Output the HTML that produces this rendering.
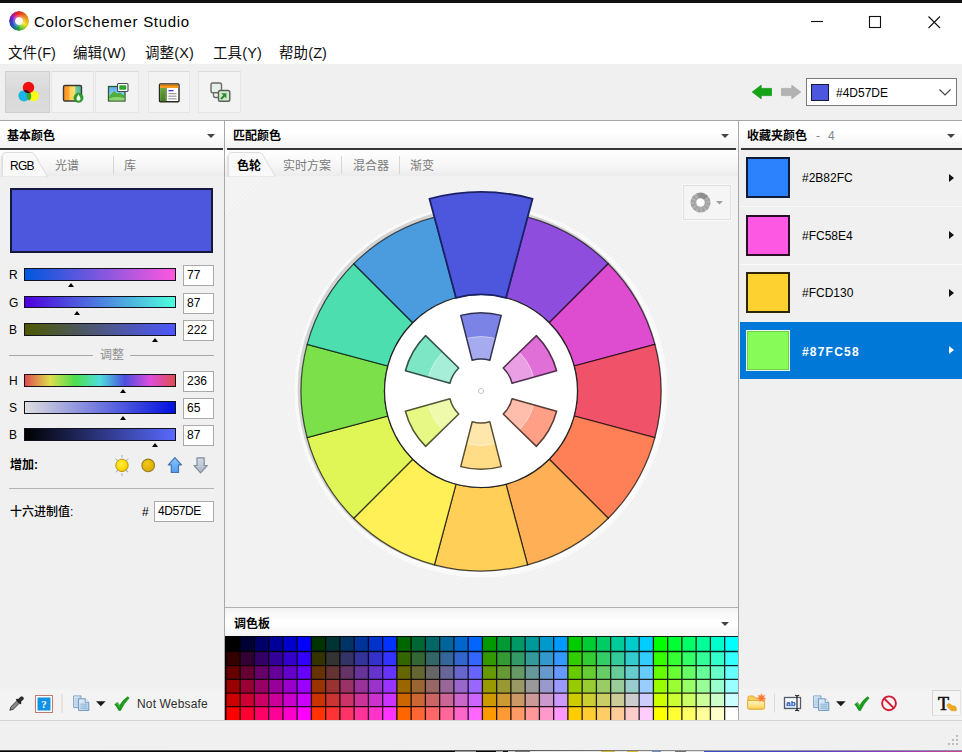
<!DOCTYPE html>
<html lang="zh-CN">
<head>
<meta charset="utf-8">
<title>ColorSchemer Studio</title>
<style>
*{box-sizing:border-box;margin:0;padding:0}
html,body{width:962px;height:752px;overflow:hidden;background:#f0f0f0}
body{position:relative;font-family:"Liberation Sans","Noto Sans CJK SC",sans-serif;font-size:12px;color:#000}
.a{position:absolute}
.t{position:absolute;white-space:nowrap;line-height:1}
.cj{font-family:"Liberation Sans","Noto Sans CJK SC",sans-serif}
#topblack{left:0;top:0;width:962px;height:2.600px;background:#101010}
#titlebar{left:0;top:3px;width:962px;height:61px;background:#fff}
.title{left:34px;top:14px;font-size:15px;letter-spacing:.7px}
.menu{top:46px;font-size:14.500px;color:#111;letter-spacing:.1px}
#toolbar{left:0;top:64px;width:962px;height:56px;background:#f0f0f0}
.tb{position:absolute;top:71px;height:42px;border:1px solid #e6e6e6;border-top-color:#dcdcdc;background:#f3f3f3}
.tb.on{background:linear-gradient(#e2e2e2,#d9d9d9 50%,#dcdcdc);border-color:#cfcfcf}
.hline{position:absolute;height:1px;background:#a5a5a5}
.vline{position:absolute;width:1px;background:#a8a8a8}
.phead{position:absolute;top:121px;height:27px;background:linear-gradient(#fdfdfd,#fff 40%,#f3f3f3)}
.pdark{position:absolute;top:148px;height:2px;background:#363636}
.ptitle{font-weight:700;font-size:12px;top:130px}
.tabrow{position:absolute;top:150px;height:26px;background:linear-gradient(#fff,#f6f6f6 60%,#ececec)}
.tab{top:160px;font-size:12px;color:#7a7a7a}
.tabsep{position:absolute;top:156px;width:1px;height:18px;background:#d6d6d6}
.caret{position:absolute;width:0;height:0;border-left:4px solid transparent;border-right:4px solid transparent;border-top:4px solid #444}
.slider{position:absolute;left:24px;width:152px;height:12.600px;border:1.500px solid #12121c}
.num{position:absolute;left:183px;width:31px;height:21px;border:1px solid #a9a9a9;background:#fff;font-size:12px;line-height:19px;padding-left:3px}
.lab{font-size:12px;left:9px}
.mark{position:absolute;width:0;height:0;border-left:3.5px solid transparent;border-right:3.5px solid transparent;border-bottom:4px solid #000}
.hatch{background:repeating-linear-gradient(135deg,#f0f0f0 0,#f0f0f0 1.4px,#f4f4f4 1.4px,#f4f4f4 2.83px)}
.fav{position:absolute;left:740px;width:222px}
.sw{position:absolute;left:746px;width:44px;height:41px;border:2px solid #141a2e}
.favt{left:802px;font-size:12px}
.tri{position:absolute;left:949px;width:0;height:0;border-top:4.5px solid transparent;border-bottom:4.5px solid transparent;border-left:5px solid #111}
</style>
</head>
<body>
<div class="a" id="titlebar"></div>
<div class="a" id="topblack"></div>

<!-- title icon -->
<div class="a" style="left:9.200px;top:11px;width:19.800px;height:19.800px;border-radius:50%;background:radial-gradient(circle,rgba(255,255,255,.25) 5px,rgba(255,255,255,0) 7px,rgba(0,0,0,.12) 9.900px),conic-gradient(from 0deg,#f02a1e,#f07a18 45deg,#f5b418 85deg,#f5e61e 120deg,#62c82a 165deg,#1ea03c 185deg,#1a80a0 210deg,#2a48c8 245deg,#5a28c8 285deg,#9a20c8 305deg,#e8204a 335deg,#f02a1e 360deg);-webkit-mask:radial-gradient(circle,transparent 3.400px,#000 4.400px);mask:radial-gradient(circle,transparent 3.400px,#000 4.400px)"></div>
<div class="t title">ColorSchemer Studio</div>

<!-- window controls -->
<svg class="a" style="left:800px;top:8px" width="160" height="30" viewBox="800 8 160 30" fill="none" stroke="#111" stroke-width="1.1">
<path d="M811 21.5h12"/>
<rect x="869.5" y="16.5" width="11" height="11"/>
<path d="M928.5 16.5l11.5 11.5M940 16.5l-11.5 11.5"/>
</svg>

<!-- menu -->
<div class="t menu" style="left:8px">文件(F)</div>
<div class="t menu" style="left:73px">编辑(W)</div>
<div class="t menu" style="left:145px">调整(X)</div>
<div class="t menu" style="left:213px">工具(Y)</div>
<div class="t menu" style="left:279px">帮助(Z)</div>

<!-- toolbar -->
<div class="a" id="toolbar"></div>
<div class="tb on" style="left:5px;width:45px"></div>
<div class="tb" style="left:51px;width:43px"></div>
<div class="tb" style="left:95px;width:44px"></div>
<div class="tb" style="left:148px;width:42px"></div>
<div class="tb" style="left:198px;width:43px"></div>
<svg class="a" style="left:0;top:64px" width="260" height="56" viewBox="0 64 260 56">
<defs>
<linearGradient id="g2" x1="0" x2="1" y1="0" y2="0"><stop offset="0" stop-color="#ff8f1e"/><stop offset=".3" stop-color="#ffa63a"/><stop offset=".36" stop-color="#ffd257"/><stop offset=".62" stop-color="#ffdf6b"/><stop offset=".68" stop-color="#7cc9a0"/><stop offset="1" stop-color="#3fb59a"/></linearGradient>
<linearGradient id="g3" x1="0" x2="0" y1="0" y2="1"><stop offset="0" stop-color="#5aa9f5"/><stop offset=".45" stop-color="#7cc6f0"/><stop offset="1" stop-color="#bfe6c0"/></linearGradient>
<linearGradient id="g4" x1="0" x2="0" y1="0" y2="1"><stop offset="0" stop-color="#6aa83a"/><stop offset="1" stop-color="#3f7f1c"/></linearGradient>
<filter id="bl" x="-20%" y="-20%" width="140%" height="140%"><feGaussianBlur stdDeviation=".65"/></filter>
</defs>
<!-- icon1: rgb circles -->
<g filter="url(#bl)">
<circle cx="33.600" cy="96" r="5.200" fill="#ffff00" fill-opacity=".9"/>
<circle cx="24" cy="95.800" r="5.600" fill="#1ab4e6"/>
<path d="M29 91.500a5.500 5.500 0 0 0 0 9a5.500 5.500 0 0 0 0-9z" fill="#3aa52a"/>
<circle cx="28.500" cy="87.500" r="5.700" fill="#f01010"/>
<path d="M24 91a5.600 5.600 0 0 0 5.500 2.300a5.600 5.600 0 0 1-3 -0.500z" fill="#400"/>
<path d="M23.700 90.500q2.500 3.500 6.300 2.300q-1.500-2.500-4.800-2.800z" fill="#30100a"/>
</g>
<!-- icon2 -->
<rect x="63.500" y="85.500" width="18" height="15.500" rx="1.500" fill="url(#g2)" stroke="#3a3a32" stroke-width="1.400"/>
<circle cx="78.500" cy="97.800" r="4.600" fill="#2f9e2f" stroke="#1f8a1f" stroke-width=".6"/>
<path d="M78.500 94.300q2 3 2 4.400a2 2 0 0 1-4 0q0-1.400 2-4.400z" fill="#eafbe6"/>
<!-- icon3 -->
<rect x="108.500" y="86.500" width="16.500" height="14.500" fill="url(#g3)" stroke="#2f5f2a" stroke-width="1.300"/>
<path d="M109.200 96l4.800-5 3.200 2.800 2.300-1.600 4.800 3.300v4.800h-15.100z" fill="#4fae3c"/>
<path d="M109.200 98.500q7-2.500 15.100-.5v2.300h-15.100z" fill="#8fd46e"/>
<rect x="117.500" y="83.500" width="10.500" height="8" rx="1" fill="#fff" stroke="#4a4a5a" stroke-width="1.100"/>
<rect x="119.300" y="85.300" width="7" height="4.400" rx=".8" fill="#2fa52f"/>
<!-- icon4 -->
<rect x="159.500" y="84" width="19.500" height="17.800" rx="1" fill="#fff" stroke="#2a2a1e" stroke-width="1.400"/>
<rect x="160.200" y="84.700" width="18.100" height="3.300" fill="#f59a1e"/>
<rect x="160.200" y="84.700" width="18.100" height="1.200" fill="#d97a10"/>
<rect x="160.200" y="88" width="5.600" height="13.100" fill="url(#g4)"/>
<rect x="165.800" y="88" width="1" height="13.100" fill="#2a3a1a" fill-opacity=".7"/>
<rect x="168.500" y="90" width="5" height="1.300" fill="#3a3ad0"/>
<rect x="168.500" y="93" width="8" height="1.200" fill="#9a9a9a"/>
<rect x="168.500" y="95.600" width="8" height="1.200" fill="#9a9a9a"/>
<rect x="168.500" y="98.200" width="8" height="1.200" fill="#9a9a9a"/>
<!-- icon5 -->
<path d="M213.500 92.500v3q0 2 2 2h3" fill="none" stroke="#6a6a6a" stroke-width="1.300"/>
<rect x="211" y="83" width="10.500" height="9.800" rx="1.800" fill="#e9efe9" stroke="#6a6a6a" stroke-width="1.400"/>
<rect x="218.500" y="90.500" width="11.300" height="10.800" rx="1.800" fill="#d6ead2" stroke="#5a5f5a" stroke-width="1.400"/>
<path d="M221.200 93.200h5.200v5.200l-1.700-1.700-3 3-1.500-1.500 3-3z" fill="#2c8f2c"/>
</svg>


<!-- history arrows + combo -->
<svg class="a" style="left:750px;top:82px" width="54" height="20" viewBox="750 82 54 20">
<path d="M752.200 92l9-6.800v3.200h10.300v7.200h-10.300v3.200z" fill="#14a414" stroke="#0f900f" stroke-width=".7" stroke-linejoin="round"/>
<path d="M800.800 92l-9-6.800v3.200h-10.300v7.200h10.300v3.200z" fill="#b2b2b2" stroke="#a8a8a8" stroke-width=".7" stroke-linejoin="round"/>
</svg>
<div class="a" style="left:806px;top:78px;width:151px;height:28px;border:1px solid #7a7a7a;background:#fff"></div>
<div class="a" style="left:811px;top:84px;width:18px;height:17px;background:#4D57DE;border:1.3px solid #15193c"></div>
<div class="t" style="left:836px;top:87px;font-size:12px">#4D57DE</div>
<svg class="a" style="left:938px;top:88px" width="14" height="9" viewBox="0 0 14 9" fill="none" stroke="#444" stroke-width="1.2"><path d="M1.5 1.5l5.500 5.500 5.500-5.500"/></svg>

<div class="hline" style="left:0;top:120px;width:962px"></div>

<!-- panel headers -->
<div class="phead" style="left:0;width:224px"></div>
<div class="phead" style="left:225px;width:513px"></div>
<div class="phead" style="left:739px;width:223px"></div>
<div class="pdark" style="left:0;width:223px"></div>
<div class="pdark" style="left:227px;width:509px"></div>
<div class="pdark" style="left:741px;width:221px"></div>
<div class="t ptitle" style="left:7px">基本颜色</div>
<div class="t ptitle" style="left:233px">匹配颜色</div>
<div class="t ptitle" style="left:747px">收藏夹颜色 <span style="font-weight:400;color:#868686;letter-spacing:2.300px">&nbsp;- 4</span></div>
<div class="caret" style="left:207px;top:134px"></div>
<div class="caret" style="left:721px;top:134px"></div>
<div class="caret" style="left:947px;top:134px"></div>

<!-- vertical separators -->
<div class="vline" style="left:224px;top:121px;height:599px"></div>
<div class="vline" style="left:738px;top:121px;height:599px"></div>

<!-- LEFT PANEL -->
<div class="tabrow" style="left:0;width:224px"></div>
<svg class="a" style="left:0;top:150px" width="60" height="27" viewBox="0 0 60 27">
<path d="M2.500 27V5.500q0-3 3-3H31q2.500 0 4 2.500L47.500 27z" fill="#f9f9f9" stroke="#dcdcdc" stroke-width="1"/><path d="M1.500 27V6" stroke="#e4e4e4" stroke-width="1.500" fill="none"/>
</svg>
<div class="t" style="left:10px;top:159.700px;font-size:12px;letter-spacing:-.7px">RGB</div>
<div class="t tab cj" style="left:55px">光谱</div>
<div class="tabsep" style="left:113px"></div>
<div class="t tab cj" style="left:124px">库</div>

<div class="a" style="left:10px;top:188px;width:203px;height:65px;background:#4D57DE;border:2px solid #14183c"></div>

<div class="t lab" style="top:269px">R</div>
<div class="slider" style="top:268px;background:linear-gradient(90deg,#0057DE,#FF57DE)"></div>
<div class="mark" style="left:67.500px;top:283.000px"></div>
<div class="num" style="top:265px">77</div>

<div class="t lab" style="top:296.500px">G</div>
<div class="slider" style="top:295.500px;background:linear-gradient(90deg,#4D00DE,#4DFFDE)"></div>
<div class="mark" style="left:73.500px;top:310.500px"></div>
<div class="num" style="top:292.500px">87</div>

<div class="t lab" style="top:324px">B</div>
<div class="slider" style="top:323px;background:linear-gradient(90deg,#4D5700,#4D57FF)"></div>
<div class="mark" style="left:152px;top:338.000px"></div>
<div class="num" style="top:320px">222</div>

<div class="hline" style="left:9px;top:355px;width:84px;background:#a8a8a8"></div>
<div class="hline" style="left:130px;top:355px;width:84px;background:#a8a8a8"></div>
<div class="t cj" style="left:100px;top:349px;font-size:12px;color:#8e8e8e">调整</div>

<div class="t lab" style="top:375px">H</div>
<div class="slider" style="top:374px;background:linear-gradient(90deg,#DE4D4D,#DEDE4D 16.7%,#4DDE4D 33.3%,#4DDEDE 50%,#4D4DDE 66.7%,#DE4DDE 83.3%,#DE4D4D)"></div>
<div class="mark" style="left:120px;top:389.000px"></div>
<div class="num" style="top:371px">236</div>

<div class="t lab" style="top:402px">S</div>
<div class="slider" style="top:401px;background:linear-gradient(90deg,#DEDEDE,#000FDE)"></div>
<div class="mark" style="left:120px;top:416.000px"></div>
<div class="num" style="top:398px">65</div>

<div class="t lab" style="top:429px">B</div>
<div class="slider" style="top:428px;background:linear-gradient(90deg,#000,#596AFF)"></div>
<div class="mark" style="left:152px;top:443.000px"></div>
<div class="num" style="top:425px">87</div>

<div class="t cj" style="left:10px;top:459px;font-size:12px;font-weight:700">增加:</div>
<svg class="a" style="left:105px;top:452px" width="110" height="28" viewBox="105 452 110 28">
<defs>
<radialGradient id="sun" cx=".45" cy=".4" r=".6"><stop offset="0" stop-color="#fff04a"/><stop offset=".7" stop-color="#ffd800"/><stop offset="1" stop-color="#e6b800"/></radialGradient>
<radialGradient id="gold" cx=".4" cy=".35" r=".7"><stop offset="0" stop-color="#f2c81a"/><stop offset=".8" stop-color="#e0ae00"/><stop offset="1" stop-color="#c89a00"/></radialGradient>
<linearGradient id="upa" x1="0" x2="0" y1="0" y2="1"><stop offset="0" stop-color="#8cc4ff"/><stop offset="1" stop-color="#4f9df0"/></linearGradient>
<linearGradient id="dna" x1="0" x2="0" y1="0" y2="1"><stop offset="0" stop-color="#d4dce6"/><stop offset="1" stop-color="#a9b6c4"/></linearGradient>
</defs>
<g stroke="#9aa0b8" stroke-width="1.100" stroke-linecap="round" opacity=".8">
<path d="M122 455.200v2M122 473.600v2M116 459l1.300 1.400M128 459l-1.300 1.400M116.300 471.800l1.300-1.400M127.700 471.800l-1.300-1.400"/>
</g>
<circle cx="122" cy="465.400" r="6.200" fill="url(#sun)" stroke="#b89a20" stroke-width="1"/>
<circle cx="148.200" cy="465.400" r="6.300" fill="url(#gold)" stroke="#94802a" stroke-width="1.100"/>
<path d="M174.900 457.600l6.600 7.300h-3v7.600h-7.200v-7.600h-3z" fill="url(#upa)" stroke="#4474ac" stroke-width="1.200" stroke-linejoin="round"/>
<path d="M200.600 472.800l6.600-7.300h-3v-7.600h-7.200v7.600h-3z" fill="url(#dna)" stroke="#7f8c9c" stroke-width="1.200" stroke-linejoin="round"/>
</svg>

<div class="hline" style="left:9px;top:488px;width:205px;background:#b4b4b4"></div>
<div class="t cj" style="left:10px;top:506px;font-size:12px;font-weight:500">十六进制值:</div>
<div class="t" style="left:142px;top:506px;font-size:12px">#</div>
<div class="num" style="left:154px;top:501px;width:60px;letter-spacing:-.4px">4D57DE</div>

<div class="a" style="left:0;top:687px;width:224px;height:33px;background:linear-gradient(#f0f0f0,#f3f3f3 4px)"></div>
<svg class="a" style="left:0;top:688px" width="224" height="32" viewBox="0 688 224 32">
<defs>
<linearGradient id="pg" x1="0" x2="1" y1="0" y2="1"><stop offset="0" stop-color="#eaf3fb"/><stop offset="1" stop-color="#a9cbe6"/></linearGradient>
<symbol id="copyic" viewBox="0 0 17 16" width="17" height="16">
<path d="M.6.600h7.400v11.800H.6z" fill="url(#pg)" stroke="#7fa3c6" stroke-width="1"/>
<path d="M1.800 3h5M1.800 5h5M1.800 7h5M1.800 9h5" stroke="#9fbfdc" stroke-width=".7"/>
<path d="M5.600 3.600h6.600l3.600 3.600v8.200H5.600z" fill="url(#pg)" stroke="#6f97bd" stroke-width="1"/>
<path d="M12.200 3.600v3.600h3.600" fill="#f4f9fd" stroke="#6f97bd" stroke-width=".9"/>
<path d="M7.300 9h6.800M7.300 11h6.800M7.300 13h6.800" stroke="#7fa6ca" stroke-width=".8"/>
</symbol>
<symbol id="chk" viewBox="0 0 16 15" width="16" height="15">
<path d="M.8 8.200l2.600-2 2.200 3Q9 3.500 13.800.4l1.300 1.500Q10 7 6.600 14.200H4.800Q3.200 10.800.8 8.200z" fill="#1c9c1c" stroke="#128212" stroke-width=".6" stroke-linejoin="round"/>
<path d="M3.400 7.200l2.200 3.400" stroke="#5fd05f" stroke-width=".8" fill="none"/>
</symbol>
</defs>
<!-- eyedropper -->
<g transform="translate(-1.200 1.300) rotate(45 16.500 703.500)">
<rect x="14.500" y="692.500" width="4" height="6" rx="1.500" fill="#2c2c2c"/>
<rect x="13.300" y="697.700" width="6.400" height="2" rx=".6" fill="#1e1e1e"/>
<path d="M14.800 699.700h3.400v8.300l-1.700 3.200-1.700-3.200z" fill="#8a8a8a" stroke="#3a3a3a" stroke-width=".9"/>
</g>
<!-- help -->
<rect x="35.500" y="695.500" width="17" height="17" fill="#fdfdfd" stroke="#c07868" stroke-width="1"/>
<rect x="37.500" y="697.500" width="13" height="13" fill="#1292e4"/>
<text x="44" y="708.200" font-family="Liberation Serif,serif" font-weight="700" font-size="11" fill="#fff" text-anchor="middle">?</text>
<rect x="61.500" y="694" width="1" height="19" fill="#e2cfd0"/>
<use href="#copyic" x="73" y="695.200"/>
<path d="M96 701.200h9.600l-4.800 5z" fill="#1a1a1a"/>
<use href="#chk" x="114" y="696.200"/>
</svg>
<div class="t" style="left:137px;top:698px;font-size:12px;color:#2e2e2e;letter-spacing:.15px">Not Websafe</div>


<!-- MIDDLE PANEL -->
<div class="tabrow" style="left:225px;width:513px"></div>
<div class="a hatch" style="left:225px;top:176px;width:513px;height:431px"></div>
<svg class="a" style="left:226px;top:150px" width="60" height="27" viewBox="0 0 60 27">
<path d="M2.500 27V5.500q0-3 3-3H33q2.500 0 4 2.500L49.500 27z" fill="#f9f9f9" stroke="#dcdcdc" stroke-width="1"/><path d="M1.500 27V6" stroke="#e4e4e4" stroke-width="1.500" fill="none"/>
</svg>
<div class="t cj" style="left:237px;top:160px;font-size:12px;font-weight:700">色轮</div>
<div class="t tab cj" style="left:283px">实时方案</div>
<div class="tabsep" style="left:341px"></div>
<div class="t tab cj" style="left:353px">混合器</div>
<div class="tabsep" style="left:399px"></div>
<div class="t tab cj" style="left:410px">渐变</div>

<div class="a" style="left:683px;top:185px;width:48px;height:35px;border:1px solid #e0e0e0;background:#f5f5f5;box-shadow:0 0 0 1px #f8f8f8"></div>
<svg class="a" style="left:688px;top:190px" width="40" height="26" viewBox="688 190 40 26">
<circle cx="700.500" cy="202.500" r="7" fill="none" stroke="#b4b4b4" stroke-width="6"/>
<circle cx="700.500" cy="202.500" r="7" fill="none" stroke="#8f8f8f" stroke-width="6" stroke-dasharray="2.200 1.460" stroke-opacity=".45"/>
<path d="M698 193a10 10 0 0 1 10 4l-5 3a4 4 0 0 0-4-2z" fill="#7d7d7d" fill-opacity=".6"/>
<circle cx="700.500" cy="202.500" r="4" fill="#fff"/>
<path d="M716 201h7l-3.500 3.500z" fill="#a0a0a0"/>
</svg>

<svg class="a" style="left:225px;top:176px" width="513" height="431" viewBox="225 176 513 431">
<circle cx="481" cy="391" r="183" fill="none" stroke="#fff" stroke-opacity=".55" stroke-width="7"/>
<circle cx="481" cy="391" r="182" fill="none" stroke="#fff" stroke-opacity=".5" stroke-width="3.5"/>
<circle cx="479.7" cy="389.7" r="180.6" fill="none" stroke="#000" stroke-opacity=".16" stroke-width="3"/>
<path d="M527.59 217.13A180 180 0 0 1 608.28 263.72L549.24 322.76A96.5 96.5 0 0 0 505.98 297.79Z" fill="#8F4DDE" stroke="#000" stroke-opacity=".68" stroke-width="1.25"/>
<path d="M608.28 263.72A180 180 0 0 1 654.87 344.41L574.21 366.02A96.5 96.5 0 0 0 549.24 322.76Z" fill="#DE4DCF" stroke="#000" stroke-opacity=".68" stroke-width="1.25"/>
<path d="M654.87 344.41A180 180 0 0 1 654.87 437.59L574.21 415.98A96.5 96.5 0 0 0 574.21 366.02Z" fill="#F0526A" stroke="#000" stroke-opacity=".68" stroke-width="1.25"/>
<path d="M654.87 437.59A180 180 0 0 1 608.28 518.28L549.24 459.24A96.5 96.5 0 0 0 574.21 415.98Z" fill="#FF7F57" stroke="#000" stroke-opacity=".68" stroke-width="1.25"/>
<path d="M608.28 518.28A180 180 0 0 1 527.59 564.87L505.98 484.21A96.5 96.5 0 0 0 549.24 459.24Z" fill="#FFB057" stroke="#000" stroke-opacity=".68" stroke-width="1.25"/>
<path d="M527.59 564.87A180 180 0 0 1 434.41 564.87L456.02 484.21A96.5 96.5 0 0 0 505.98 484.21Z" fill="#FFCF57" stroke="#000" stroke-opacity=".68" stroke-width="1.25"/>
<path d="M434.41 564.87A180 180 0 0 1 353.72 518.28L412.76 459.24A96.5 96.5 0 0 0 456.02 484.21Z" fill="#FFF057" stroke="#000" stroke-opacity=".68" stroke-width="1.25"/>
<path d="M353.72 518.28A180 180 0 0 1 307.13 437.59L387.79 415.98A96.5 96.5 0 0 0 412.76 459.24Z" fill="#E0F556" stroke="#000" stroke-opacity=".68" stroke-width="1.25"/>
<path d="M307.13 437.59A180 180 0 0 1 307.13 344.41L387.79 366.02A96.5 96.5 0 0 0 387.79 415.98Z" fill="#7BE04A" stroke="#000" stroke-opacity=".68" stroke-width="1.25"/>
<path d="M307.13 344.41A180 180 0 0 1 353.72 263.72L412.76 322.76A96.5 96.5 0 0 0 387.79 366.02Z" fill="#4DDEB0" stroke="#000" stroke-opacity=".68" stroke-width="1.25"/>
<path d="M353.72 263.72A180 180 0 0 1 434.41 217.13L456.02 297.79A96.5 96.5 0 0 0 412.76 322.76Z" fill="#4A9CDE" stroke="#000" stroke-opacity=".68" stroke-width="1.25"/>
<circle cx="481" cy="391" r="96.5" fill="#fff" stroke="#222" stroke-width="1.2"/>
<path d="M429.50 198.78A199 199 0 0 1 532.50 198.78L505.98 297.79A96.5 96.5 0 0 0 456.02 297.79Z" fill="#4D57DE" stroke="#1b2166" stroke-width="1.8" stroke-linejoin="miter"/>
<path d="M460.73 315.37A78.3 78.3 0 0 1 501.27 315.37L489.82 360.24A32 32 0 0 0 472.18 360.24Z" fill="#7B83E6"/>
<path d="M536.37 335.63A78.3 78.3 0 0 1 556.63 370.73L512.05 383.26A32 32 0 0 0 503.23 367.98Z" fill="#E070D8"/>
<path d="M556.63 411.27A78.3 78.3 0 0 1 536.37 446.37L503.23 414.02A32 32 0 0 0 512.05 398.74Z" fill="#FF9F85"/>
<path d="M501.27 466.63A78.3 78.3 0 0 1 460.73 466.63L472.18 421.76A32 32 0 0 0 489.82 421.76Z" fill="#FFDC85"/>
<path d="M425.63 446.37A78.3 78.3 0 0 1 405.37 411.27L449.95 398.74A32 32 0 0 0 458.77 414.02Z" fill="#E8F885"/>
<path d="M405.37 370.73A78.3 78.3 0 0 1 425.63 335.63L458.77 367.98A32 32 0 0 0 449.95 383.26Z" fill="#7DE6C4"/>
<circle cx="481" cy="391" r="54.5" fill="#fff" fill-opacity=".32"/>
<circle cx="481" cy="391" r="54.5" fill="none" stroke="#fff" stroke-opacity=".45" stroke-width="1"/>
<path d="M460.73 315.37A78.3 78.3 0 0 1 501.27 315.37L489.82 360.24A32 32 0 0 0 472.18 360.24Z" fill="none" stroke="#222440" stroke-opacity=".9" stroke-width="1.5" stroke-linejoin="round"/>
<path d="M536.37 335.63A78.3 78.3 0 0 1 556.63 370.73L512.05 383.26A32 32 0 0 0 503.23 367.98Z" fill="none" stroke="#3e1f3c" stroke-opacity=".9" stroke-width="1.5" stroke-linejoin="round"/>
<path d="M556.63 411.27A78.3 78.3 0 0 1 536.37 446.37L503.23 414.02A32 32 0 0 0 512.05 398.74Z" fill="none" stroke="#472c25" stroke-opacity=".9" stroke-width="1.5" stroke-linejoin="round"/>
<path d="M501.27 466.63A78.3 78.3 0 0 1 460.73 466.63L472.18 421.76A32 32 0 0 0 489.82 421.76Z" fill="none" stroke="#473d25" stroke-opacity=".9" stroke-width="1.5" stroke-linejoin="round"/>
<path d="M425.63 446.37A78.3 78.3 0 0 1 405.37 411.27L449.95 398.74A32 32 0 0 0 458.77 414.02Z" fill="none" stroke="#404525" stroke-opacity=".9" stroke-width="1.5" stroke-linejoin="round"/>
<path d="M405.37 370.73A78.3 78.3 0 0 1 425.63 335.63L458.77 367.98A32 32 0 0 0 449.95 383.26Z" fill="none" stroke="#234036" stroke-opacity=".9" stroke-width="1.5" stroke-linejoin="round"/>
<circle cx="481" cy="391" r="2.6" fill="#fff" stroke="#c8c8c8" stroke-width="1"/>
</svg>

<div class="hline" style="left:225px;top:607px;width:513px;background:#b0b0b0"></div>
<div class="a" style="left:225px;top:608px;width:513px;height:28px;background:linear-gradient(#f4f4f4,#fff 50%,#f4f4f4)"></div>
<div class="t ptitle cj" style="left:234px;top:617.500px">调色板</div>
<div class="caret" style="left:721px;top:622px"></div>
<svg class="a" style="left:225px;top:636px" width="513" height="84" viewBox="225 636 513 84">
<rect x="225" y="636" width="513" height="84" fill="#000"/>
<rect x="225.50" y="636.00" width="14.55" height="15.40" fill="#000000"/>
<rect x="225.50" y="651.10" width="14.55" height="14.40" fill="#330000"/>
<rect x="225.50" y="665.20" width="14.55" height="14.10" fill="#660000"/>
<rect x="225.50" y="679.00" width="14.55" height="14.10" fill="#990000"/>
<rect x="225.50" y="692.80" width="14.55" height="13.80" fill="#CC0000"/>
<rect x="225.50" y="706.30" width="14.55" height="14.50" fill="#FF0000"/>
<rect x="239.75" y="636.00" width="14.55" height="15.40" fill="#000033"/>
<rect x="239.75" y="651.10" width="14.55" height="14.40" fill="#330033"/>
<rect x="239.75" y="665.20" width="14.55" height="14.10" fill="#660033"/>
<rect x="239.75" y="679.00" width="14.55" height="14.10" fill="#990033"/>
<rect x="239.75" y="692.80" width="14.55" height="13.80" fill="#CC0033"/>
<rect x="239.75" y="706.30" width="14.55" height="14.50" fill="#FF0033"/>
<rect x="254.00" y="636.00" width="14.55" height="15.40" fill="#000066"/>
<rect x="254.00" y="651.10" width="14.55" height="14.40" fill="#330066"/>
<rect x="254.00" y="665.20" width="14.55" height="14.10" fill="#660066"/>
<rect x="254.00" y="679.00" width="14.55" height="14.10" fill="#990066"/>
<rect x="254.00" y="692.80" width="14.55" height="13.80" fill="#CC0066"/>
<rect x="254.00" y="706.30" width="14.55" height="14.50" fill="#FF0066"/>
<rect x="268.25" y="636.00" width="14.55" height="15.40" fill="#000099"/>
<rect x="268.25" y="651.10" width="14.55" height="14.40" fill="#330099"/>
<rect x="268.25" y="665.20" width="14.55" height="14.10" fill="#660099"/>
<rect x="268.25" y="679.00" width="14.55" height="14.10" fill="#990099"/>
<rect x="268.25" y="692.80" width="14.55" height="13.80" fill="#CC0099"/>
<rect x="268.25" y="706.30" width="14.55" height="14.50" fill="#FF0099"/>
<rect x="282.50" y="636.00" width="14.55" height="15.40" fill="#0000CC"/>
<rect x="282.50" y="651.10" width="14.55" height="14.40" fill="#3300CC"/>
<rect x="282.50" y="665.20" width="14.55" height="14.10" fill="#6600CC"/>
<rect x="282.50" y="679.00" width="14.55" height="14.10" fill="#9900CC"/>
<rect x="282.50" y="692.80" width="14.55" height="13.80" fill="#CC00CC"/>
<rect x="282.50" y="706.30" width="14.55" height="14.50" fill="#FF00CC"/>
<rect x="296.75" y="636.00" width="14.55" height="15.40" fill="#0000FF"/>
<rect x="296.75" y="651.10" width="14.55" height="14.40" fill="#3300FF"/>
<rect x="296.75" y="665.20" width="14.55" height="14.10" fill="#6600FF"/>
<rect x="296.75" y="679.00" width="14.55" height="14.10" fill="#9900FF"/>
<rect x="296.75" y="692.80" width="14.55" height="13.80" fill="#CC00FF"/>
<rect x="296.75" y="706.30" width="14.55" height="14.50" fill="#FF00FF"/>
<rect x="311.00" y="636.00" width="14.55" height="15.40" fill="#003300"/>
<rect x="311.00" y="651.10" width="14.55" height="14.40" fill="#333300"/>
<rect x="311.00" y="665.20" width="14.55" height="14.10" fill="#663300"/>
<rect x="311.00" y="679.00" width="14.55" height="14.10" fill="#993300"/>
<rect x="311.00" y="692.80" width="14.55" height="13.80" fill="#CC3300"/>
<rect x="311.00" y="706.30" width="14.55" height="14.50" fill="#FF3300"/>
<rect x="325.25" y="636.00" width="14.55" height="15.40" fill="#003333"/>
<rect x="325.25" y="651.10" width="14.55" height="14.40" fill="#333333"/>
<rect x="325.25" y="665.20" width="14.55" height="14.10" fill="#663333"/>
<rect x="325.25" y="679.00" width="14.55" height="14.10" fill="#993333"/>
<rect x="325.25" y="692.80" width="14.55" height="13.80" fill="#CC3333"/>
<rect x="325.25" y="706.30" width="14.55" height="14.50" fill="#FF3333"/>
<rect x="339.50" y="636.00" width="14.55" height="15.40" fill="#003366"/>
<rect x="339.50" y="651.10" width="14.55" height="14.40" fill="#333366"/>
<rect x="339.50" y="665.20" width="14.55" height="14.10" fill="#663366"/>
<rect x="339.50" y="679.00" width="14.55" height="14.10" fill="#993366"/>
<rect x="339.50" y="692.80" width="14.55" height="13.80" fill="#CC3366"/>
<rect x="339.50" y="706.30" width="14.55" height="14.50" fill="#FF3366"/>
<rect x="353.75" y="636.00" width="14.55" height="15.40" fill="#003399"/>
<rect x="353.75" y="651.10" width="14.55" height="14.40" fill="#333399"/>
<rect x="353.75" y="665.20" width="14.55" height="14.10" fill="#663399"/>
<rect x="353.75" y="679.00" width="14.55" height="14.10" fill="#993399"/>
<rect x="353.75" y="692.80" width="14.55" height="13.80" fill="#CC3399"/>
<rect x="353.75" y="706.30" width="14.55" height="14.50" fill="#FF3399"/>
<rect x="368.00" y="636.00" width="14.55" height="15.40" fill="#0033CC"/>
<rect x="368.00" y="651.10" width="14.55" height="14.40" fill="#3333CC"/>
<rect x="368.00" y="665.20" width="14.55" height="14.10" fill="#6633CC"/>
<rect x="368.00" y="679.00" width="14.55" height="14.10" fill="#9933CC"/>
<rect x="368.00" y="692.80" width="14.55" height="13.80" fill="#CC33CC"/>
<rect x="368.00" y="706.30" width="14.55" height="14.50" fill="#FF33CC"/>
<rect x="382.25" y="636.00" width="14.55" height="15.40" fill="#0033FF"/>
<rect x="382.25" y="651.10" width="14.55" height="14.40" fill="#3333FF"/>
<rect x="382.25" y="665.20" width="14.55" height="14.10" fill="#6633FF"/>
<rect x="382.25" y="679.00" width="14.55" height="14.10" fill="#9933FF"/>
<rect x="382.25" y="692.80" width="14.55" height="13.80" fill="#CC33FF"/>
<rect x="382.25" y="706.30" width="14.55" height="14.50" fill="#FF33FF"/>
<rect x="396.50" y="636.00" width="14.55" height="15.40" fill="#006600"/>
<rect x="396.50" y="651.10" width="14.55" height="14.40" fill="#336600"/>
<rect x="396.50" y="665.20" width="14.55" height="14.10" fill="#666600"/>
<rect x="396.50" y="679.00" width="14.55" height="14.10" fill="#996600"/>
<rect x="396.50" y="692.80" width="14.55" height="13.80" fill="#CC6600"/>
<rect x="396.50" y="706.30" width="14.55" height="14.50" fill="#FF6600"/>
<rect x="410.75" y="636.00" width="14.55" height="15.40" fill="#006633"/>
<rect x="410.75" y="651.10" width="14.55" height="14.40" fill="#336633"/>
<rect x="410.75" y="665.20" width="14.55" height="14.10" fill="#666633"/>
<rect x="410.75" y="679.00" width="14.55" height="14.10" fill="#996633"/>
<rect x="410.75" y="692.80" width="14.55" height="13.80" fill="#CC6633"/>
<rect x="410.75" y="706.30" width="14.55" height="14.50" fill="#FF6633"/>
<rect x="425.00" y="636.00" width="14.55" height="15.40" fill="#006666"/>
<rect x="425.00" y="651.10" width="14.55" height="14.40" fill="#336666"/>
<rect x="425.00" y="665.20" width="14.55" height="14.10" fill="#666666"/>
<rect x="425.00" y="679.00" width="14.55" height="14.10" fill="#996666"/>
<rect x="425.00" y="692.80" width="14.55" height="13.80" fill="#CC6666"/>
<rect x="425.00" y="706.30" width="14.55" height="14.50" fill="#FF6666"/>
<rect x="439.25" y="636.00" width="14.55" height="15.40" fill="#006699"/>
<rect x="439.25" y="651.10" width="14.55" height="14.40" fill="#336699"/>
<rect x="439.25" y="665.20" width="14.55" height="14.10" fill="#666699"/>
<rect x="439.25" y="679.00" width="14.55" height="14.10" fill="#996699"/>
<rect x="439.25" y="692.80" width="14.55" height="13.80" fill="#CC6699"/>
<rect x="439.25" y="706.30" width="14.55" height="14.50" fill="#FF6699"/>
<rect x="453.50" y="636.00" width="14.55" height="15.40" fill="#0066CC"/>
<rect x="453.50" y="651.10" width="14.55" height="14.40" fill="#3366CC"/>
<rect x="453.50" y="665.20" width="14.55" height="14.10" fill="#6666CC"/>
<rect x="453.50" y="679.00" width="14.55" height="14.10" fill="#9966CC"/>
<rect x="453.50" y="692.80" width="14.55" height="13.80" fill="#CC66CC"/>
<rect x="453.50" y="706.30" width="14.55" height="14.50" fill="#FF66CC"/>
<rect x="467.75" y="636.00" width="14.55" height="15.40" fill="#0066FF"/>
<rect x="467.75" y="651.10" width="14.55" height="14.40" fill="#3366FF"/>
<rect x="467.75" y="665.20" width="14.55" height="14.10" fill="#6666FF"/>
<rect x="467.75" y="679.00" width="14.55" height="14.10" fill="#9966FF"/>
<rect x="467.75" y="692.80" width="14.55" height="13.80" fill="#CC66FF"/>
<rect x="467.75" y="706.30" width="14.55" height="14.50" fill="#FF66FF"/>
<rect x="482.00" y="636.00" width="14.55" height="15.40" fill="#009900"/>
<rect x="482.00" y="651.10" width="14.55" height="14.40" fill="#339900"/>
<rect x="482.00" y="665.20" width="14.55" height="14.10" fill="#669900"/>
<rect x="482.00" y="679.00" width="14.55" height="14.10" fill="#999900"/>
<rect x="482.00" y="692.80" width="14.55" height="13.80" fill="#CC9900"/>
<rect x="482.00" y="706.30" width="14.55" height="14.50" fill="#FF9900"/>
<rect x="496.25" y="636.00" width="14.55" height="15.40" fill="#009933"/>
<rect x="496.25" y="651.10" width="14.55" height="14.40" fill="#339933"/>
<rect x="496.25" y="665.20" width="14.55" height="14.10" fill="#669933"/>
<rect x="496.25" y="679.00" width="14.55" height="14.10" fill="#999933"/>
<rect x="496.25" y="692.80" width="14.55" height="13.80" fill="#CC9933"/>
<rect x="496.25" y="706.30" width="14.55" height="14.50" fill="#FF9933"/>
<rect x="510.50" y="636.00" width="14.55" height="15.40" fill="#009966"/>
<rect x="510.50" y="651.10" width="14.55" height="14.40" fill="#339966"/>
<rect x="510.50" y="665.20" width="14.55" height="14.10" fill="#669966"/>
<rect x="510.50" y="679.00" width="14.55" height="14.10" fill="#999966"/>
<rect x="510.50" y="692.80" width="14.55" height="13.80" fill="#CC9966"/>
<rect x="510.50" y="706.30" width="14.55" height="14.50" fill="#FF9966"/>
<rect x="524.75" y="636.00" width="14.55" height="15.40" fill="#009999"/>
<rect x="524.75" y="651.10" width="14.55" height="14.40" fill="#339999"/>
<rect x="524.75" y="665.20" width="14.55" height="14.10" fill="#669999"/>
<rect x="524.75" y="679.00" width="14.55" height="14.10" fill="#999999"/>
<rect x="524.75" y="692.80" width="14.55" height="13.80" fill="#CC9999"/>
<rect x="524.75" y="706.30" width="14.55" height="14.50" fill="#FF9999"/>
<rect x="539.00" y="636.00" width="14.55" height="15.40" fill="#0099CC"/>
<rect x="539.00" y="651.10" width="14.55" height="14.40" fill="#3399CC"/>
<rect x="539.00" y="665.20" width="14.55" height="14.10" fill="#6699CC"/>
<rect x="539.00" y="679.00" width="14.55" height="14.10" fill="#9999CC"/>
<rect x="539.00" y="692.80" width="14.55" height="13.80" fill="#CC99CC"/>
<rect x="539.00" y="706.30" width="14.55" height="14.50" fill="#FF99CC"/>
<rect x="553.25" y="636.00" width="14.55" height="15.40" fill="#0099FF"/>
<rect x="553.25" y="651.10" width="14.55" height="14.40" fill="#3399FF"/>
<rect x="553.25" y="665.20" width="14.55" height="14.10" fill="#6699FF"/>
<rect x="553.25" y="679.00" width="14.55" height="14.10" fill="#9999FF"/>
<rect x="553.25" y="692.80" width="14.55" height="13.80" fill="#CC99FF"/>
<rect x="553.25" y="706.30" width="14.55" height="14.50" fill="#FF99FF"/>
<rect x="567.50" y="636.00" width="14.55" height="15.40" fill="#00CC00"/>
<rect x="567.50" y="651.10" width="14.55" height="14.40" fill="#33CC00"/>
<rect x="567.50" y="665.20" width="14.55" height="14.10" fill="#66CC00"/>
<rect x="567.50" y="679.00" width="14.55" height="14.10" fill="#99CC00"/>
<rect x="567.50" y="692.80" width="14.55" height="13.80" fill="#CCCC00"/>
<rect x="567.50" y="706.30" width="14.55" height="14.50" fill="#FFCC00"/>
<rect x="581.75" y="636.00" width="14.55" height="15.40" fill="#00CC33"/>
<rect x="581.75" y="651.10" width="14.55" height="14.40" fill="#33CC33"/>
<rect x="581.75" y="665.20" width="14.55" height="14.10" fill="#66CC33"/>
<rect x="581.75" y="679.00" width="14.55" height="14.10" fill="#99CC33"/>
<rect x="581.75" y="692.80" width="14.55" height="13.80" fill="#CCCC33"/>
<rect x="581.75" y="706.30" width="14.55" height="14.50" fill="#FFCC33"/>
<rect x="596.00" y="636.00" width="14.55" height="15.40" fill="#00CC66"/>
<rect x="596.00" y="651.10" width="14.55" height="14.40" fill="#33CC66"/>
<rect x="596.00" y="665.20" width="14.55" height="14.10" fill="#66CC66"/>
<rect x="596.00" y="679.00" width="14.55" height="14.10" fill="#99CC66"/>
<rect x="596.00" y="692.80" width="14.55" height="13.80" fill="#CCCC66"/>
<rect x="596.00" y="706.30" width="14.55" height="14.50" fill="#FFCC66"/>
<rect x="610.25" y="636.00" width="14.55" height="15.40" fill="#00CC99"/>
<rect x="610.25" y="651.10" width="14.55" height="14.40" fill="#33CC99"/>
<rect x="610.25" y="665.20" width="14.55" height="14.10" fill="#66CC99"/>
<rect x="610.25" y="679.00" width="14.55" height="14.10" fill="#99CC99"/>
<rect x="610.25" y="692.80" width="14.55" height="13.80" fill="#CCCC99"/>
<rect x="610.25" y="706.30" width="14.55" height="14.50" fill="#FFCC99"/>
<rect x="624.50" y="636.00" width="14.55" height="15.40" fill="#00CCCC"/>
<rect x="624.50" y="651.10" width="14.55" height="14.40" fill="#33CCCC"/>
<rect x="624.50" y="665.20" width="14.55" height="14.10" fill="#66CCCC"/>
<rect x="624.50" y="679.00" width="14.55" height="14.10" fill="#99CCCC"/>
<rect x="624.50" y="692.80" width="14.55" height="13.80" fill="#CCCCCC"/>
<rect x="624.50" y="706.30" width="14.55" height="14.50" fill="#FFCCCC"/>
<rect x="638.75" y="636.00" width="14.55" height="15.40" fill="#00CCFF"/>
<rect x="638.75" y="651.10" width="14.55" height="14.40" fill="#33CCFF"/>
<rect x="638.75" y="665.20" width="14.55" height="14.10" fill="#66CCFF"/>
<rect x="638.75" y="679.00" width="14.55" height="14.10" fill="#99CCFF"/>
<rect x="638.75" y="692.80" width="14.55" height="13.80" fill="#CCCCFF"/>
<rect x="638.75" y="706.30" width="14.55" height="14.50" fill="#FFCCFF"/>
<rect x="653.00" y="636.00" width="14.55" height="15.40" fill="#00FF00"/>
<rect x="653.00" y="651.10" width="14.55" height="14.40" fill="#33FF00"/>
<rect x="653.00" y="665.20" width="14.55" height="14.10" fill="#66FF00"/>
<rect x="653.00" y="679.00" width="14.55" height="14.10" fill="#99FF00"/>
<rect x="653.00" y="692.80" width="14.55" height="13.80" fill="#CCFF00"/>
<rect x="653.00" y="706.30" width="14.55" height="14.50" fill="#FFFF00"/>
<rect x="667.25" y="636.00" width="14.55" height="15.40" fill="#00FF33"/>
<rect x="667.25" y="651.10" width="14.55" height="14.40" fill="#33FF33"/>
<rect x="667.25" y="665.20" width="14.55" height="14.10" fill="#66FF33"/>
<rect x="667.25" y="679.00" width="14.55" height="14.10" fill="#99FF33"/>
<rect x="667.25" y="692.80" width="14.55" height="13.80" fill="#CCFF33"/>
<rect x="667.25" y="706.30" width="14.55" height="14.50" fill="#FFFF33"/>
<rect x="681.50" y="636.00" width="14.55" height="15.40" fill="#00FF66"/>
<rect x="681.50" y="651.10" width="14.55" height="14.40" fill="#33FF66"/>
<rect x="681.50" y="665.20" width="14.55" height="14.10" fill="#66FF66"/>
<rect x="681.50" y="679.00" width="14.55" height="14.10" fill="#99FF66"/>
<rect x="681.50" y="692.80" width="14.55" height="13.80" fill="#CCFF66"/>
<rect x="681.50" y="706.30" width="14.55" height="14.50" fill="#FFFF66"/>
<rect x="695.75" y="636.00" width="14.55" height="15.40" fill="#00FF99"/>
<rect x="695.75" y="651.10" width="14.55" height="14.40" fill="#33FF99"/>
<rect x="695.75" y="665.20" width="14.55" height="14.10" fill="#66FF99"/>
<rect x="695.75" y="679.00" width="14.55" height="14.10" fill="#99FF99"/>
<rect x="695.75" y="692.80" width="14.55" height="13.80" fill="#CCFF99"/>
<rect x="695.75" y="706.30" width="14.55" height="14.50" fill="#FFFF99"/>
<rect x="710.00" y="636.00" width="14.55" height="15.40" fill="#00FFCC"/>
<rect x="710.00" y="651.10" width="14.55" height="14.40" fill="#33FFCC"/>
<rect x="710.00" y="665.20" width="14.55" height="14.10" fill="#66FFCC"/>
<rect x="710.00" y="679.00" width="14.55" height="14.10" fill="#99FFCC"/>
<rect x="710.00" y="692.80" width="14.55" height="13.80" fill="#CCFFCC"/>
<rect x="710.00" y="706.30" width="14.55" height="14.50" fill="#FFFFCC"/>
<rect x="724.25" y="636.00" width="14.55" height="15.40" fill="#00FFFF"/>
<rect x="724.25" y="651.10" width="14.55" height="14.40" fill="#33FFFF"/>
<rect x="724.25" y="665.20" width="14.55" height="14.10" fill="#66FFFF"/>
<rect x="724.25" y="679.00" width="14.55" height="14.10" fill="#99FFFF"/>
<rect x="724.25" y="692.80" width="14.55" height="13.80" fill="#CCFFFF"/>
<rect x="724.25" y="706.30" width="14.55" height="14.50" fill="#FFFFFF"/>
<path d="M225.90 636V722M240.15 636V722M254.40 636V722M268.65 636V722M282.90 636V722M297.15 636V722M311.40 636V722M325.65 636V722M339.90 636V722M354.15 636V722M368.40 636V722M382.65 636V722M396.90 636V722M411.15 636V722M425.40 636V722M439.65 636V722M453.90 636V722M468.15 636V722M482.40 636V722M496.65 636V722M510.90 636V722M525.15 636V722M539.40 636V722M553.65 636V722M567.90 636V722M582.15 636V722M596.40 636V722M610.65 636V722M624.90 636V722M639.15 636V722M653.40 636V722M667.65 636V722M681.90 636V722M696.15 636V722M710.40 636V722M724.65 636V722M225.5 636.40H740.5M225.5 651.50H740.5M225.5 665.60H740.5M225.5 679.40H740.5M225.5 693.20H740.5M225.5 706.70H740.5" stroke="#000" stroke-opacity=".85" stroke-width="1.3" fill="none"/>
</svg>

<!-- RIGHT PANEL -->
<div class="fav" style="top:150px;height:57px;border-bottom:1px solid #fafafa"></div>
<div class="fav" style="top:207px;height:57.500px;border-bottom:1px solid #fafafa"></div>
<div class="fav" style="top:264.500px;height:57.500px"></div>
<div class="fav" style="top:322px;height:57px;background:#0078d7"></div>
<div class="sw" style="top:157px;background:#2B82FC;border-color:#0e1a36"></div>
<div class="sw" style="top:214.500px;background:#FC58E4;border-color:#2a0e26"></div>
<div class="sw" style="top:272px;background:#FCD130;border-color:#2e2408"></div>
<div class="sw" style="top:330px;background:#87FC58;border:1.500px solid #e9f6ee;box-shadow:inset 0 0 0 1px #6fd048"></div>
<div class="t favt" style="top:172px">#2B82FC</div>
<div class="t favt" style="top:229.500px">#FC58E4</div>
<div class="t favt" style="top:287px">#FCD130</div>
<div class="t favt" style="top:345.500px;color:#fff;font-weight:700;letter-spacing:1.200px">#87FC58</div>
<div class="tri" style="top:173.500px"></div>
<div class="tri" style="top:231px"></div>
<div class="tri" style="top:288.500px"></div>
<div class="tri" style="top:346px;border-left-color:#fff"></div>

<div class="a" style="left:739px;top:687px;width:223px;height:33px;background:linear-gradient(#f0f0f0,#f3f3f3 4px)"></div>
<div class="a" style="left:932px;top:690px;width:29px;height:26px;border:1px solid #e4e4e4;border-top-color:#d4d4d4;border-left:1.500px solid #d6d6d6;background:#f5f5f5"></div>
<svg class="a" style="left:740px;top:688px" width="222" height="32" viewBox="740 688 222 32">
<defs>
<linearGradient id="fold" x1="0" x2="0" y1="0" y2="1"><stop offset="0" stop-color="#fff6c4"/><stop offset="1" stop-color="#ffd052"/></linearGradient>
<linearGradient id="rn" x1="0" x2="0" y1="0" y2="1"><stop offset="0" stop-color="#fff"/><stop offset="1" stop-color="#cfe2f7"/></linearGradient>
</defs>
<!-- folder -->
<path d="M748 697.500q0-1.500 1.500-1.500h4l1.500 2h7.500q1.500 0 1.500 1.500v8q0 1.500-1.500 1.500h-13q-1.500 0-1.500-1.500z" fill="#f8d060" stroke="#e0a838" stroke-width="1"/>
<path d="M747.600 700.500h17v7.300q0 1.300-1.300 1.300h-14.400q-1.300 0-1.300-1.300z" fill="url(#fold)" stroke="#dba830" stroke-width=".9"/>
<path d="M761.500 693.500l1 2.400 2.600-.8-1.300 2.300 2.200 1.500-2.600.5.300 2.600-2.200-1.600-2 1.700.2-2.700-2.600-.4 2.100-1.600-1.300-2.300 2.600.7z" fill="#ff7a3c" stroke="#ff9a5c" stroke-width=".4"/>
<rect x="774" y="693.500" width="1" height="19" fill="#d9d9d9"/>
<!-- rename -->
<rect x="784.500" y="697.500" width="16" height="11" fill="url(#rn)" stroke="#555a66" stroke-width="1.300"/>
<rect x="795" y="698.300" width="4.600" height="9.400" fill="#f2f2f2"/>
<text x="786.300" y="706.300" font-family="Liberation Sans,sans-serif" font-weight="700" font-size="8" fill="#2050c0">ab</text>
<path d="M795 695.300q2 0 2 1.500v12.500q0 1.500-2 1.500M799.200 695.300q-2.200 0-2.200 1.500M797 709.300q0 1.500 2.200 1.500" fill="none" stroke="#1a1a1a" stroke-width="1.100"/>
<use href="#copyic" x="813" y="695.200"/>
<path d="M836 701.200h9.600l-4.800 5z" fill="#1a1a1a"/>
<use href="#chk" x="854" y="696.200"/>
<circle cx="889" cy="703.300" r="6.900" fill="#fbf3f3" stroke="#d01c34" stroke-width="1.900"/>
<path d="M884.200 698.500l9.600 9.600" stroke="#d01c34" stroke-width="1.900"/>
<text x="943.600" y="710" font-family="Liberation Serif,serif" font-size="18" fill="#111" text-anchor="middle" stroke="#111" stroke-width=".6">T</text>
<path d="M947.500 704q1.500-1.200 3 .3l1.800 1.500q3.500-.5 4 2.200v2.800h-5l-3.600-3.600q-1.400-1.600-.2-3.200z" fill="#f0a81e" stroke="#d8901a" stroke-width=".5"/>
</svg>


<!-- status bar -->
<div class="hline" style="left:0;top:720px;width:962px;background:#d4d4d4"></div>
<div class="a" style="left:0;top:721px;width:962px;height:29px;background:#f0f0f0"></div>
<div class="a" style="left:0;top:750.500px;width:962px;height:1.500px;background:linear-gradient(90deg,#050505 0px,#050505 455px,#9a9a9a 455px,#9a9a9a 476px,#050505 476px,#050505 496px,#a8a8a8 496px,#a8a8a8 503px,#111 503px,#111 508px,#c8c8c8 508px,#c8c8c8 515px,#777 515px,#777 530px,#e6e6e6 530px,#e6e6e6 601px,#d8b830 601px,#d8b830 615px,#e6e6e6 615px,#e6e6e6 627px,#d8b830 627px,#d8b830 638px,#e6e6e6 638px,#e6e6e6 652px,#6a90d0 652px,#6a90d0 661px,#e6e6e6 661px,#e6e6e6 675px,#707070 675px,#707070 686px,#e0e0e0 686px,#e0e0e0 704px,#3a4cc4 704px,#4540c4 780px,#6a3cc4 840px,#9a3cb8 900px,#d04484 962px)"></div><div class="a" style="left:0;top:749.500px;width:962px;height:1px;background:linear-gradient(90deg,#4a4a4a,#5a5a5a 55%,#9a9a9a 75%,#8a8ab0)"></div>
<svg class="a" style="left:946px;top:733px" width="14" height="14" viewBox="0 0 14 14" fill="#bdbdbd">
<rect x="10" y="2" width="2" height="2"/><rect x="6" y="6" width="2" height="2"/><rect x="10" y="6" width="2" height="2"/><rect x="2" y="10" width="2" height="2"/><rect x="6" y="10" width="2" height="2"/><rect x="10" y="10" width="2" height="2"/>
</svg>
</body>
</html>
